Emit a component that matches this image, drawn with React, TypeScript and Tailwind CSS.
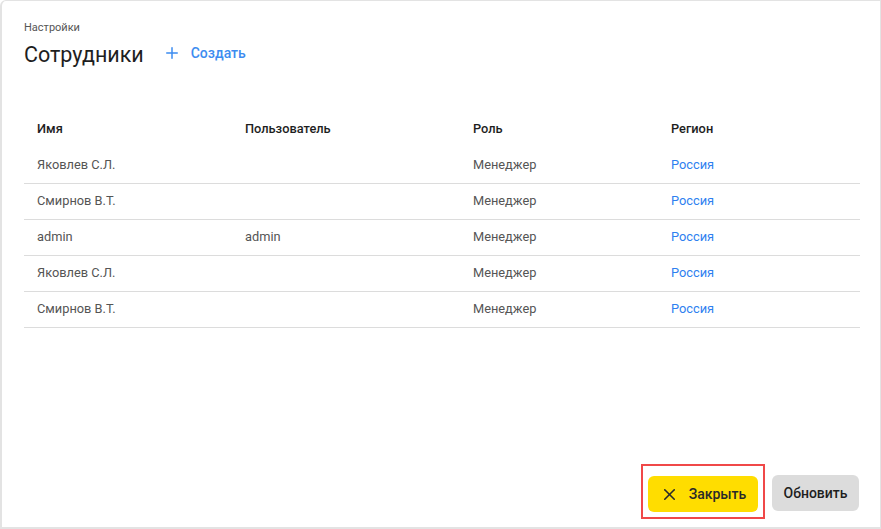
import { X, Plus } from "lucide-react";

const rows = [
  { name: "Яковлев С.Л.", user: "", role: "Менеджер", region: "Россия" },
  { name: "Смирнов В.Т.", user: "", role: "Менеджер", region: "Россия" },
  { name: "admin", user: "admin", role: "Менеджер", region: "Россия" },
  { name: "Яковлев С.Л.", user: "", role: "Менеджер", region: "Россия" },
  { name: "Смирнов В.Т.", user: "", role: "Менеджер", region: "Россия" },
];

export default function App() {
  return (
    <div
      className="w-[881px] h-[529px] bg-white"
      style={{ fontFamily: "Roboto, 'Noto Sans', sans-serif" }}
    >
      <div className="flex h-full flex-col rounded-tl-[6px] border-2 border-t-[1px] border-r-[1px] border-[#e3e3e3] bg-white pl-[22px] pr-[20px]">
        {/* Header */}
        <div className="pt-[20px] text-[11px] leading-[14px] text-[#555]">Настройки</div>
        <div className="mt-[5px] flex items-center">
          <h1 className="text-[21.5px] leading-[30px] text-[#1e1e1e]">Сотрудники</h1>
          <button className="ml-[19px] mb-[4px] flex items-center gap-[10px] text-[14px] font-medium text-[#3d8cf0]">
            <Plus size={18} strokeWidth={2} />
            Создать
          </button>
        </div>

        {/* Table */}
        <table className="mt-[41px] w-full table-fixed border-collapse text-[12.8px]">
          <colgroup>
            <col className="w-[208px]" />
            <col className="w-[228px]" />
            <col className="w-[198px]" />
            <col />
          </colgroup>
          <thead>
            <tr className="h-[36px] text-left text-[#1e1e1e]">
              <th className="pl-[13px] font-medium">Имя</th>
              <th className="pl-[13px] font-medium">Пользователь</th>
              <th className="pl-[13px] font-medium">Роль</th>
              <th className="pl-[13px] font-medium">Регион</th>
            </tr>
          </thead>
          <tbody>
            {rows.map((r, i) => (
              <tr
                key={i}
                className={`h-[36px] text-[#555] ${i > 0 ? "border-t border-[#dcdcdc]" : ""} ${i === rows.length - 1 ? "border-b border-[#dcdcdc]" : ""}`}
              >
                <td className="pl-[13px]">{r.name}</td>
                <td className="pl-[13px]">{r.user}</td>
                <td className="pl-[13px]">{r.role}</td>
                <td className="pl-[13px] text-[#2f7ff0]">{r.region}</td>
              </tr>
            ))}
          </tbody>
        </table>

        {/* Footer */}
        <div className="mt-auto mb-[8px] mr-[1px] flex items-center justify-end">
          <div className="border-2 border-[#f04848] px-[5px] pt-[10px] pb-[5px]">
            <button className="flex h-[36px] w-[110px] items-center justify-center gap-[10px] rounded-[6px] bg-[#ffdd00] text-[14px] font-medium text-[#2a2a2a]">
              <X size={19} strokeWidth={2} />
              Закрыть
            </button>
          </div>
          <button className="ml-[7px] mb-[-3px] h-[36px] w-[87px] rounded-[6px] bg-[#dcdcdc] text-[14px] font-medium text-[#1e1e1e]">
            Обновить
          </button>
        </div>
      </div>
    </div>
  );
}
